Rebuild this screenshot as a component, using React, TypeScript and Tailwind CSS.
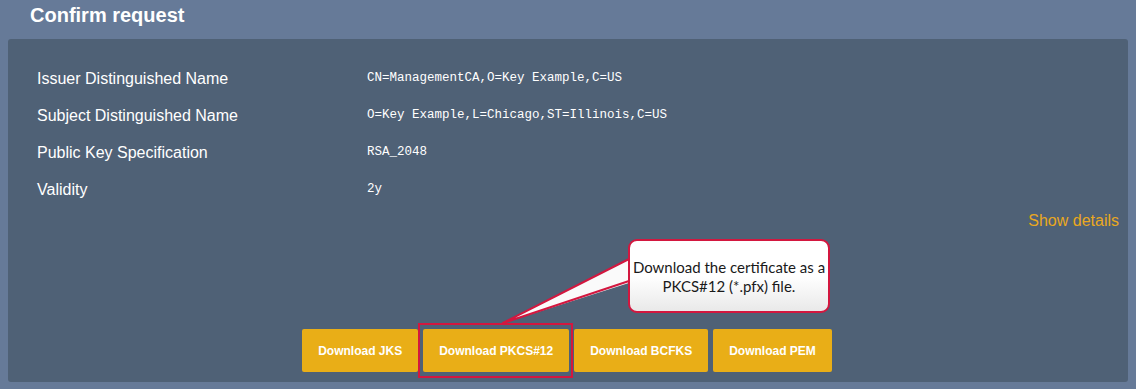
const rows = [
  { label: 'Issuer Distinguished Name', value: 'CN=ManagementCA,O=Key Example,C=US' },
  { label: 'Subject Distinguished Name', value: 'O=Key Example,L=Chicago,ST=Illinois,C=US' },
  { label: 'Public Key Specification', value: 'RSA_2048' },
  { label: 'Validity', value: '2y' },
];

const buttons = ['Download JKS', 'Download PKCS#12', 'Download BCFKS', 'Download PEM'];

function Callout() {
  return (
    <div className="absolute left-[620px] top-[200px] w-[212px] h-[126px] pointer-events-none">
      <div className="absolute left-[8px] top-[39px] w-[202px] h-[74px] rounded-[9px] border-2 border-[#d3173f] bg-gradient-to-b from-white via-white to-[#e9e9e9] flex flex-col items-center justify-center text-[15px] leading-[19px] text-[#1a1a1a] font-['Lato','Open_Sans',sans-serif] pt-[1px]">
        <span>Download the certificate as a</span>
        <span>PKCS#12 (*.pfx) file.</span>
      </div>
    </div>
  );
}

function Tail() {
  // pointer from the callout down to the highlighted button
  return (
    <svg className="absolute left-0 top-0 pointer-events-none" width="1136" height="389">
      <polygon points="632,258 503,323 632,282" fill="#fafafa" />
      <polyline points="629,259 503,323 629,281" fill="none" stroke="#d3173f" strokeWidth="2" strokeLinejoin="round" />
    </svg>
  );
}

export default function App() {
  return (
    <div className="relative w-full h-[389px] bg-[#667a98] px-2 pb-[7px] flex flex-col font-['Liberation_Sans',Arial,sans-serif] text-white overflow-hidden">
      <div className="h-[39px] flex items-center pl-[22px] pb-[9px] text-[20px] font-bold">Confirm request</div>
      <div className="flex-1 rounded-[3px] bg-[#4f6176] flex flex-col pt-[21px] pl-[29px] pr-[9px] pb-[10px]">
        <div className="flex flex-col">
          {rows.map((r) => (
            <div key={r.label} className="h-[37px] flex items-center">
              <div className="w-[330px] text-[16px]">{r.label}</div>
              <div className="text-[12.5px] font-['Liberation_Mono','DejaVu_Sans_Mono',monospace]">{r.value}</div>
            </div>
          ))}
        </div>
        <div className="flex justify-end mt-[1px]">
          <span className="text-[16px] text-[#eaa820]">Show details</span>
        </div>
        <div className="mt-auto flex justify-center gap-[5px] pr-[22px]">
          {buttons.map((b) => (
            <div key={b} className="relative flex">
              <button className="h-[43px] px-4 rounded-[2px] bg-[#e9ae17] text-white text-[12px] font-bold">{b}</button>
              {b === 'Download PKCS#12' && (
                <div className="absolute -left-[5px] -right-[4px] -top-[6px] -bottom-[6px] border-2 border-[#d3173f]" />
              )}
            </div>
          ))}
        </div>
      </div>
      <Tail />
      <Callout />
    </div>
  );
}
